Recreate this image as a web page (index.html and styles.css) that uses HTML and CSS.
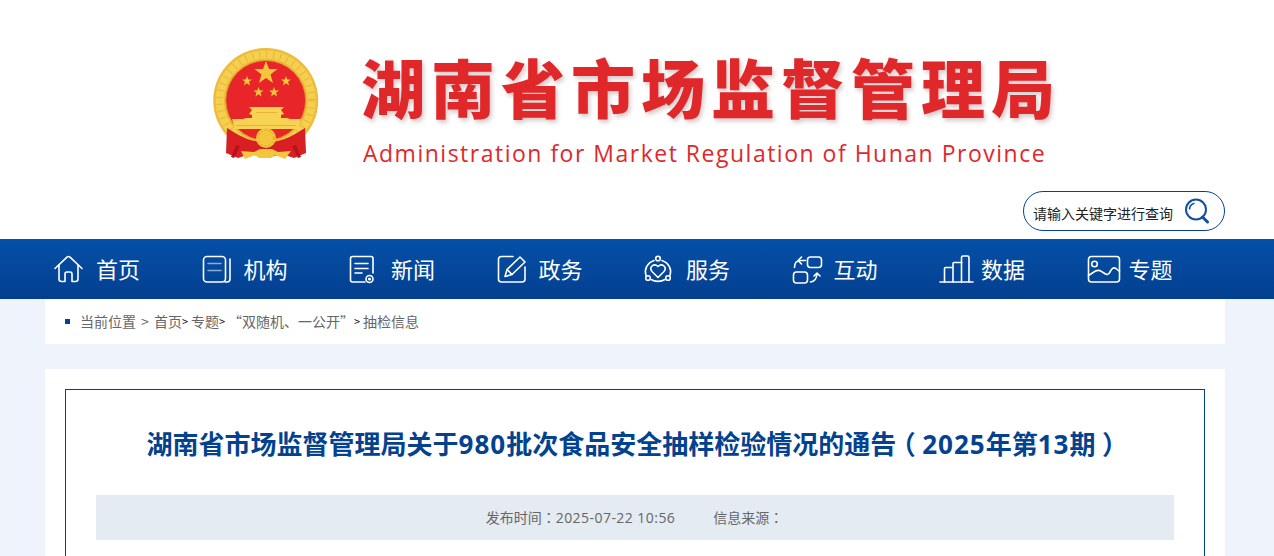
FILE: index.html
```html
<!DOCTYPE html>
<html lang="zh-CN">
<head>
    <meta charset="UTF-8">
    <meta name="viewport" content="width=device-width, initial-scale=1.0">
    <title>湖南省市场监督管理局</title>
    <link rel="stylesheet" href="styles.css">
</head>
<body>
    <header class="header">
        <div class="wrap">
            <a href="#" class="logo">
                <svg class="emblem" viewBox="205 40 125 125" width="125" height="125">
                    <circle cx="265.7" cy="100.5" r="52.5" fill="#eebb3a"/>
                    <circle cx="265.7" cy="100.5" r="46" fill="none" stroke="#f5d050" stroke-width="8"/>
                    <circle cx="265.7" cy="100.5" r="46" fill="none" stroke="#e8b534" stroke-width="7" stroke-dasharray="1 6"/>
                    <circle cx="265.7" cy="100.5" r="40" fill="#e8262a" stroke="#d99d28" stroke-width="1"/>
                    <polygon fill="#f3c63c" points="266,61 269,69 277.500,69 270.500,74.500 273,83 266,78 259,83 261.500,74.500 254.500,69 263,69"/>
                    <polygon fill="#f3c63c" points="247,76 248.300,79.500 252,79.500 249,81.800 250.100,85.500 247,83.300 243.900,85.500 245,81.800 242,79.500 245.700,79.500"/>
                    <polygon fill="#f3c63c" points="286,76 287.300,79.500 291,79.500 288,81.800 289.100,85.500 286,83.300 282.900,85.500 284,81.800 281,79.500 284.700,79.500"/>
                    <polygon fill="#f3c63c" points="258.500,87 259.800,90.500 263.500,90.500 260.500,92.800 261.600,96.500 258.500,94.300 255.400,96.500 256.500,92.800 253.500,90.500 257.200,90.500"/>
                    <polygon fill="#f3c63c" points="274,87 275.300,90.500 279,90.500 276,92.800 277.100,96.500 274,94.300 270.900,96.500 272,92.800 269,90.500 272.700,90.500"/>
                    <path fill="#f8d252" d="M249 107h35l-3 3 3 4-3 1v3h6l3 1h11l-3 10h-63l-3-10h11l3-1h6v-3l-3-1 3-4z"/>
                    <path fill="#e9b23a" d="M236 125h60v1h-60zM256 112h21v1h-21z"/>
                    <path fill="#d71f24" d="M227 128c10 6 20 14 39 14s29-8 39-14l1 25-12 5-12-4-16 4-16-4-12 4-12-5z"/>
                    <path fill="#b5141a" d="M240 146l-6 12-3-1 5-12zM292 146l6 12 3-1-5-12z"/>
                    <path fill="#f3c63c" d="M241 151l13 1 6-3h12l6 3 13-1-6 8-10-4-4 3h-12l-4-3-10 4z"/>
                    <circle cx="266" cy="138" r="10" fill="#f3c63c"/>
                    <circle cx="266" cy="138" r="8" fill="none" stroke="#d99d28" stroke-dasharray="2 2"/>
                </svg>
                <div class="logo-text">
                    <h1>湖南省市场监督管理局</h1>
                    <p>Administration for Market Regulation of Hunan Province</p>
                </div>
            </a>
            <form class="search">
                <input type="text" placeholder="请输入关键字进行查询">
                <svg viewBox="0 0 26 26" width="26" height="26" fill="none" stroke="#12519f">
                    <circle cx="12" cy="11.500" r="10" stroke-width="2"/>
                    <path d="M5.500 11.500a6.500 6.500 0 0 1 5-6.300" stroke-width="1.600"/>
                    <path d="M18.500 19l5 5" stroke-width="3" stroke-linecap="round"/>
                </svg>
            </form>
        </div>
    </header>

    <nav class="nav">
        <div class="wrap navbar">
            <a href="#" class="nav-item">
                <svg class="nav-icon" viewBox="0 0 36 30">
                    <path d="M2 14.500 14 3.200q1.500-1.400 3 0L29 14.500"/>
                    <path d="M6 11v14q0 2.500 2.500 2.500H12V20q0-2 2-2h3q2 0 2 2v7.500h3.500Q25 27.500 25 25V11"/>
                </svg>
                首页
            </a>
            <a href="#" class="nav-item">
                <svg class="nav-icon" viewBox="0 0 36 30">
                    <rect x="2.500" y="2.500" width="22" height="25.500" rx="3.500"/>
                    <path d="M29 5v20q0 3-3 3h-2"/>
                    <path class="faint" d="M7 9.500h13M7 16.500h13"/>
                </svg>
                机构
            </a>
            <a href="#" class="nav-item">
                <svg class="nav-icon" viewBox="0 0 36 30">
                    <path d="M25 19V4.500Q25 2.500 23 2.500H4.500Q2.500 2.500 2.500 4.500V26q0 2 2 2H17"/>
                    <path d="M7 9.500h13M7 14.500h13M7 19h7"/>
                    <circle cx="21.500" cy="25" r="3.500"/>
                    <circle cx="21.500" cy="25" r=".8"/>
                </svg>
                新闻
            </a>
            <a href="#" class="nav-item">
                <svg class="nav-icon" viewBox="0 0 36 30">
                    <path d="M17 2.500H5.500q-3 0-3 3V25q0 3 3 3H26q3 0 3-3V13"/>
                    <path d="M9 22.500l2-7L24 3l5 5-13 12.500z"/>
                    <path d="M11 15.500l5 5"/>
                </svg>
                政务
            </a>
            <a href="#" class="nav-item">
                <svg class="nav-icon" viewBox="0 0 36 30">
                    <circle cx="15" cy="4.500" r="2.300"/>
                    <circle cx="5" cy="24" r="2.300"/>
                    <circle cx="25" cy="24" r="2.300"/>
                    <path d="M11 6.500C4 9 1 15.500 3 21.500M19 6.500c7 2.500 10 9 8 15M8 25.500c4 2.500 10 2.500 14 0"/>
                    <path d="M15 23.500 9 17.500q-2.500-3 0-5.500 3-2.500 6 .5 3-3 6-.5 2.500 2.500 0 5.500z"/>
                </svg>
                服务
            </a>
            <a href="#" class="nav-item">
                <svg class="nav-icon" viewBox="0 0 36 30">
                    <rect x="16.500" y="3" width="14" height="10.500" rx="3"/>
                    <rect x="2.500" y="18" width="14" height="11" rx="3"/>
                    <path d="M3.500 13.500q0-7 6-7h5M10.500 3 7 6.500l3.500 3.500"/>
                    <path d="M19.500 28q6-.5 6.500-8.500M23 22l3-3 3 3"/>
                </svg>
                互动
            </a>
            <a href="#" class="nav-item">
                <svg class="nav-icon" viewBox="0 0 36 30">
                    <path d="M2 28h33"/>
                    <path d="M6.500 28V14.500q0-1 1-1H15M15 28V9.500q0-1 1-1h8M23.500 28V3.500q0-1.500 1.500-1.500h4.500q1.500 0 1.500 1.500V28"/>
                </svg>
                数据
            </a>
            <a href="#" class="nav-item">
                <svg class="nav-icon" viewBox="0 0 36 30">
                    <rect x="2.500" y="2.500" width="31" height="25.500" rx="3"/>
                    <circle cx="8.500" cy="10" r="2.800"/>
                    <path d="M2.500 21.500 9.500 17q3.500-1.500 6 .5l4 2.500q2 1 3.500-.5l2.500-4q2-2.500 4.500-1l3.500 3"/>
                </svg>
                专题
            </a>
        </div>
    </nav>

    <div class="wrap">
        <div class="crumb">
            <i class="dot"></i>
            <span>当前位置</span><b class="sep-wide">&gt;</b><a href="#">首页</a><b>&gt;</b><a href="#">专题</a><b>&gt;</b><a href="#"><span class="quote-l">“</span>双随机、一公开<span class="quote-r">”</span></a><b>&gt;</b><a href="#">抽检信息</a>
        </div>

        <main class="article">
            <div class="frame">
                <h2 class="title">湖南省市场监督管理局关于<span class="num">980</span>批次食品安全抽样检验情况的通告<span class="paren">（</span><span class="num">2025</span>年第<span class="num">13</span>期<span class="paren">）</span></h2>
                <div class="meta">
                    <span>发布时间<span class="colon" lang="zh-TW">：</span><span class="time">2025-07-22 10:56</span></span>
                    <span>信息来源<span class="colon" lang="zh-TW">：</span></span>
                </div>
            </div>
        </main>
    </div>
</body>
</html>
```

FILE: styles.css
```css
* {
    padding: 0;
    margin: 0;
    box-sizing: border-box;
}
html, body {
    height: 100%;
    overflow: hidden;
}
body {
    background-color: #eff3fb;
    font-family: "Open Sans", "Noto Sans CJK SC", sans-serif;
}
a {
    text-decoration: none;
    color: inherit;
}
.wrap {
    width: 1180px;
    margin-left: 45px;
}

.header {
    background-color: #fff;
    height: 239px;
}
.logo {
    display: flex;
    padding: 40px 0 0 160px;
    height: 191px;
}
.emblem {
    flex: none;
}
.logo-text {
    margin-left: 32px;
    color: #e0282b;
}
.logo-text h1 {
    font-family: "Noto Sans CJK SC", sans-serif;
    font-size: 64px;
    line-height: 74px;
    font-weight: 900;
    letter-spacing: 6px;
    white-space: nowrap;
    margin-top: 8px;
    margin-left: -1px;
    text-shadow: 2px 3px 4px rgba(120, 60, 60, .28);
}
.logo-text p {
    font-size: 23px;
    line-height: 30px;
    font-weight: 500;
    letter-spacing: 1.500px;
    white-space: nowrap;
    margin-top: 16px;
    margin-left: 1px;
}
.search {
    display: flex;
    align-items: center;
    justify-content: space-between;
    width: 202px;
    height: 40px;
    margin-left: auto;
    padding: 0 14px 0 9px;
    border: 1px solid #03428f;
    border-radius: 20px;
}
.search input {
    width: 145px;
    padding-top: 3px;
    border: 0;
    outline: 0;
    background: none;
    font: 14px "Noto Sans CJK SC", sans-serif;
}
.search input::placeholder {
    color: #222;
    opacity: 1;
}

.nav {
    height: 60px;
    background: linear-gradient(#0550a8, #033f8f);
}
.navbar {
    display: flex;
}
.nav-item {
    display: flex;
    align-items: center;
    gap: 7px;
    width: 147.500px;
    height: 60px;
    padding: 0 0 2px 8px;
    color: #fff;
    font-size: 22px;
    font-family: "Noto Sans CJK SC", sans-serif;
}
.nav-icon {
    flex: none;
    width: 36px;
    height: 30px;
    margin-top: 2px;
    fill: none;
    stroke: #fff;
    stroke-width: 1.600;
    stroke-linecap: round;
    stroke-linejoin: round;
}
.nav-icon .faint {
    stroke: rgba(255, 255, 255, .55);
}

.crumb {
    display: flex;
    align-items: center;
    height: 45px;
    padding: 0 0 2px 20px;
    background-color: #fff;
    color: #666;
    font-size: 14px;
    font-family: "Noto Sans CJK SC", sans-serif;
}
.crumb .dot {
    width: 5px;
    height: 5px;
    margin: 2px 10px 0 0;
    background-color: #03428f;
}
.crumb b {
    font-weight: 400;
    font-size: 11px;
    color: #111;
    width: 9px;
}
.crumb .sep-wide {
    color: #666;
    font-size: 14px;
    width: 18px;
    text-align: center;
}
.quote-l, .quote-r {
    display: inline-block;
    width: 14px;
}
.quote-l {
    text-align: right;
}

.article {
    height: 400px;
    margin-top: 25px;
    padding: 20px;
    background-color: #fff;
}
.frame {
    height: 600px;
    padding: 0 30px;
    border: 1px solid #03428f;
}
.title {
    margin-top: 31px;
    padding-right: 2px;
    font-size: 26px;
    line-height: 44px;
    font-weight: 700;
    text-align: center;
    color: #03428f;
    white-space: nowrap;
    font-family: "Noto Sans CJK SC", sans-serif;
}
.title .num {
    font-family: "Open Sans", sans-serif;
    letter-spacing: 1px;
}
.paren {
    padding: 0 6.500px;
    font-feature-settings: "halt";
}
.meta {
    display: flex;
    justify-content: center;
    gap: 38px;
    height: 45px;
    margin-top: 29px;
    padding-right: 1px;
    background-color: #e4ebf3;
    font-size: 14px;
    line-height: 45px;
    color: #666;
}
.colon {
    font-family: "Noto Sans CJK TC", sans-serif;
}
.time {
    letter-spacing: .45px;
}
```
